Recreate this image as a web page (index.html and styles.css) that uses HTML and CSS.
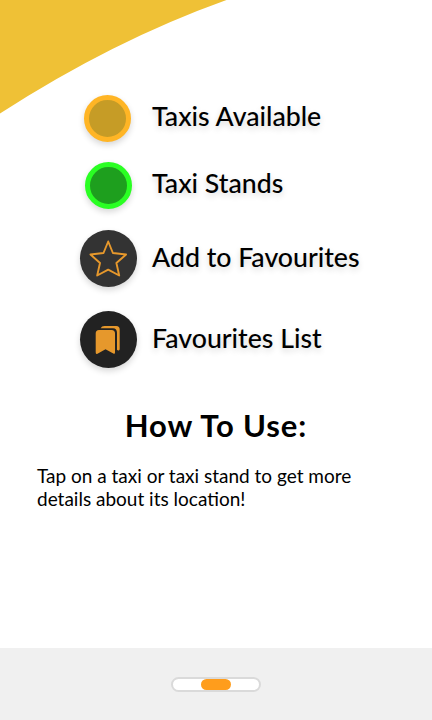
FILE: index.html
```html
<!DOCTYPE html>
<html lang="en">
<head>
<meta charset="utf-8">
<title>Taxi guide</title>
<link rel="stylesheet" href="styles.css">
</head>
<body>
<main class="screen">
  <svg class="corner" width="230" height="116" viewBox="0 0 230 116" aria-hidden="true"><path fill="#efc136" d="M0 0H226.500Q113 40.500 0 113.500Z"/></svg>
  <ul class="legend">
    <li class="row row-taxi"><span class="mark"><span class="dot dot-taxi"></span></span><span class="label">Taxis Available</span></li>
    <li class="row row-stand"><span class="mark"><span class="dot dot-stand"></span></span><span class="label">Taxi Stands</span></li>
    <li class="row row-add"><span class="mark"><span class="disc disc-star"><svg width="57" height="57" viewBox="0 0 57 57"><path fill="none" stroke="#e6982c" stroke-width="1.900" stroke-linejoin="round" d="M28.200 11.500L32.900 23L46.100 24.500L36.400 33L39.200 45.500L28.200 39.700L17.200 45.500L20 33L10.500 24.500L23.500 23Z"/></svg></span></span><span class="label">Add to Favourites</span></li>
    <li class="row row-list"><span class="mark"><span class="disc disc-book"><svg width="57" height="57" viewBox="0 0 57 57"><path fill="#e6982c" d="M19 19H31.500Q35 19 35 22.500V41.500Q35 43.500 33.300 42.500L25.500 38.200L17.500 42.700Q15.700 43.500 15.700 41.500V22.500Q15.700 19 19 19Z"/><path fill="#e6982c" d="M20.700 17.200Q21.500 15 24.500 15H36.300Q39.700 15 39.700 18.500V38Q39.700 40 37.700 39.300L37 38.700V22Q37 17.200 33 17.200Z"/></svg></span></span><span class="label">Favourites List</span></li>
  </ul>
  <section class="guide">
    <h1 class="title">How To Use:</h1>
    <p class="copy">Tap on a taxi or taxi stand to get more details about its location!</p>
  </section>
  <footer class="footer"><div class="pager"><span class="page"></span></div></footer>
</main>
</body>
</html>
```
FILE: styles.css
```css
* { box-sizing: border-box; }
body { margin: 0; background: #fff; color: #000; font-family: Lato, Carlito, sans-serif; }
.screen { position: relative; display: flex; flex-direction: column; width: 432px; height: 720px; overflow: hidden; }
.corner { position: absolute; top: 0; left: 0; }
.legend { margin: 0; padding: 89px 0 0 79.500px; list-style: none; height: 400px; }
.row { display: flex; align-items: center; gap: 15.500px; height: 58px; }
.row-stand { margin-top: 9px; }
.row-add { margin-top: 15.500px; }
.row-list { margin-top: 23px; }
.mark { display: flex; justify-content: center; width: 57px; }
.dot { width: 47px; height: 47px; border: 5px solid; border-radius: 50%; box-shadow: 0 3px 6px rgba(0,0,0,.16); }
.dot-taxi { margin-right: 1px; background: #c69c26; border-color: #ffb525; }
.dot-stand { margin-left: 1px; background: #1e9f1e; border-color: #2aff23; }
.disc { width: 57px; height: 57px; border-radius: 50%; box-shadow: 0 3px 6px rgba(0,0,0,.16); }
.disc svg { display: block; }
.disc-star { background: #333; }
.disc-book { background: #222; }
.label { font-size: 26.700px; font-weight: 500; line-height: 32px; margin-top: -4px; white-space: nowrap; text-shadow: 0 3px 6px rgba(0,0,0,.16); }
.guide { flex: 1; padding: 6px 37px 0; }
.title { margin: 0; font-size: 31px; line-height: 38px; font-weight: 700; letter-spacing: .900px; text-align: center; }
.copy { margin: 20px 0 0; font-size: 19px; line-height: 23px; }
.footer { display: flex; align-items: center; justify-content: center; height: 72px; background: #f0f0f0; }
.pager { display: flex; justify-content: center; width: 90px; height: 15px; margin-top: 1px; border: 2px solid #dadada; border-radius: 8px; background: #fff; }
.page { width: 30px; height: 11px; border-radius: 6px; background: #ff9d1c; }
```
